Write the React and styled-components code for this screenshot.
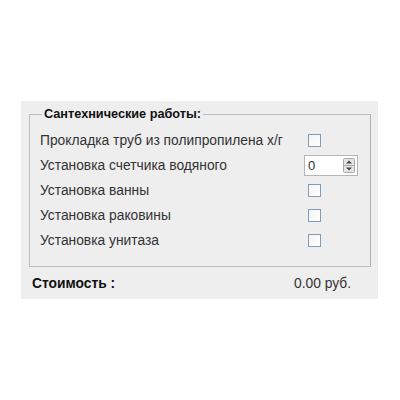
import React from "react";
import styled, { createGlobalStyle } from "styled-components";

const GlobalStyle = createGlobalStyle`
    body {
        margin: 0;
        background: #ffffff;
        font-family: "Liberation Sans", Arial, sans-serif;
    }
`;

const Panel = styled.div`
    margin: 101px 0 0 21px;
    width: 357px;
    height: 198px;
    background: #eeeeee;
    box-sizing: border-box;
    padding: 6px 7px 0 8px;
    display: flex;
    flex-direction: column;
`;

const Group = styled.fieldset`
    margin: 0;
    padding: 7px 0 13px 10px;
    border: 1px solid #bcbcbc;
    border-right-color: #b0b0b0;
    min-width: 0;
`;

const Legend = styled.legend`
    margin-left: 2px;
    padding: 0 2px;
    font-size: 12.7px;
    font-weight: bold;
    color: #111111;
    line-height: 14px;
`;

const Row = styled.div`
    display: grid;
    grid-template-columns: 264px 1fr;
    align-items: center;
    height: 25px;
    font-size: 13.8px;
    color: #333333;
`;

const Control = styled.div`
    display: flex;
    align-items: center;
    padding-left: ${(p) => p.$indent || 0}px;
`;

const Check = styled.span`
    display: block;
    width: 11px;
    height: 11px;
    border: 1px solid #7f9db9;
    background: linear-gradient(135deg, #f4f4f4, #ffffff);
`;

const Spinner = styled.div`
    width: 54px;
    height: 21px;
    box-sizing: border-box;
    border: 1px solid #b5b5b5;
    background: #ffffff;
    display: flex;
    align-items: center;
    justify-content: space-between;
    padding: 0 2px 0 3px;
    font-size: 13px;
    color: #333333;
`;

const SpinButton = styled.svg`
    display: block;
`;

const Footer = styled.div`
    flex: 1;
    display: flex;
    align-items: center;
    justify-content: space-between;
    padding: 0 20px 0 3px;
    font-size: 13.8px;
    color: #333333;
`;

const Caption = styled.span`
    font-weight: bold;
    color: #111111;
`;

const items = [
    { label: "Прокладка труб из полипропилена х/г", kind: "check" },
    { label: "Установка счетчика водяного", kind: "spin", value: "0" },
    { label: "Установка ванны", kind: "check" },
    { label: "Установка раковины", kind: "check" },
    { label: "Установка унитаза", kind: "check" },
];

const App = () => {
    return (
        <>
            <GlobalStyle />
            <Panel>
                <Group>
                    <Legend>Сантехнические работы:</Legend>
                    {items.map((item) => (
                        <Row key={item.label}>
                            <span>{item.label}</span>
                            {item.kind === "check" ? (
                                <Control $indent={4}>
                                    <Check />
                                </Control>
                            ) : (
                                <Control>
                                    <Spinner>
                                        <span>{item.value}</span>
                                        <SpinButton width="12" height="15" viewBox="0 0 12 15">
                                            <rect x="0.5" y="0.5" width="11" height="14" rx="1" fill="#e4e4e4" stroke="#a8a8a8" />
                                            <line x1="1" y1="7.5" x2="11" y2="7.5" stroke="#a8a8a8" />
                                            <path d="M3 5.5 L6 2.5 L9 5.5 Z" fill="#444444" />
                                            <path d="M3 9.5 L6 12.5 L9 9.5 Z" fill="#444444" />
                                        </SpinButton>
                                    </Spinner>
                                </Control>
                            )}
                        </Row>
                    ))}
                </Group>
                <Footer>
                    <Caption>Стоимость :</Caption>
                    <span>0.00 руб.</span>
                </Footer>
            </Panel>
        </>
    );
};

export default App;
